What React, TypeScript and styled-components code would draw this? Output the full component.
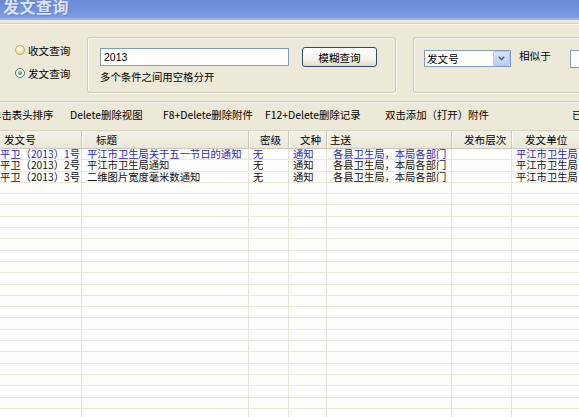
import React from "react";
import styled, { createGlobalStyle } from "styled-components";

const GlobalStyle = createGlobalStyle`
  html, body {
    margin: 0;
    padding: 0;
  }
  body {
    width: 579px;
    height: 417px;
    overflow: hidden;
    background: #ece9d8;
    font-family: "Noto Sans CJK SC", "Liberation Sans", sans-serif;
    font-size: 10.4px;
    color: #000;
  }
`;

type Column = {
  title: string;
  width: number;
  headPad: number;
  cellPad: number;
};

const COLUMNS: Column[] = [
  { title: "发文号", width: 82, headPad: 4, cellPad: 0 },
  { title: "标题", width: 167, headPad: 14, cellPad: 5 },
  { title: "密级", width: 40, headPad: 11, cellPad: 4 },
  { title: "文种", width: 38, headPad: 11, cellPad: 4 },
  { title: "主送", width: 125, headPad: 3, cellPad: 6 },
  { title: "发布层次", width: 60, headPad: 12, cellPad: 4 },
  { title: "发文单位", width: 110, headPad: 13, cellPad: 4 },
];

const RECORDS: string[][] = [
  ["平卫（2013）1号", "平江市卫生局关于五一节日的通知", "无", "通知", "各县卫生局，本局各部门", "", "平江市卫生局"],
  ["平卫（2013）2号", "平江市卫生局通知", "无", "通知", "各县卫生局，本局各部门", "", "平江市卫生局"],
  ["平卫（2013）3号", "二维图片宽度毫米数通知", "无", "通知", "各县卫生局，本局各部门", "", "平江市卫生局"],
];

const EMPTY_ROWS = 22;

const TOOLS: [string, number][] = [
  ["单击表头排序", 79],
  ["Delete删除视图", 93],
  ["F8+Delete删除附件", 102],
  ["F12+Delete删除记录", 120],
  ["双击添加（打开）附件", 187],
  ["已选中 3 条记录", 100],
];

const gridCols = COLUMNS.map((c) => `${c.width}px`).join(" ");

const Window = styled.div`
  width: 579px;
  height: 417px;
  overflow: hidden;
  display: flex;
  flex-direction: column;
`;

const TitleBar = styled.div`
  flex: none;
  height: 18px;
  background: linear-gradient(180deg, #6b8bd6 0%, #7595de 70%, #7f9ee3 100%);
  border-bottom: 2px solid #96b4ec;
  overflow: hidden;
  padding-left: 3px;
`;

const TitleText = styled.div`
  margin-top: -3px;
  font-size: 16px;
  line-height: 18px;
  font-weight: bold;
  color: rgba(236, 241, 252, 0.88);
  letter-spacing: 0.5px;
  text-shadow: 1px 1px 1px rgba(60, 80, 140, 0.3);
`;

const TitleRule = styled.div`
  flex: none;
  margin-top: 3px;
  height: 1px;
  background: #d8cfc6;
  border-bottom: 1px solid #f8f6ee;
`;

const SearchArea = styled.div`
  flex: none;
  height: 76px;
  display: flex;
  align-items: flex-start;
`;

const RadioColumn = styled.div`
  flex: none;
  width: 72px;
  margin-left: 15px;
  padding-top: 18px;
  display: flex;
  flex-direction: column;
  gap: 9px;
`;

const RadioRow = styled.label`
  display: flex;
  align-items: center;
  gap: 3px;
  height: 14px;
  white-space: nowrap;
  font-size: 10.6px;
`;

const RadioDot = styled.span<{ $checked?: boolean }>`
  box-sizing: border-box;
  width: 10px;
  height: 10px;
  border-radius: 50%;
  flex: none;
  display: flex;
  align-items: center;
  justify-content: center;
  border: 1px solid ${(p) => (p.$checked ? "#4f6f99" : "#b6a978")};
  background: ${(p) =>
    p.$checked
      ? "linear-gradient(135deg, #e6e6df 0%, #ffffff 70%)"
      : "radial-gradient(circle at 40% 35%, #fffbe8 0%, #f5e3a4 60%, #e4c56e 100%)"};
`;

const RadioMark = styled.span`
  width: 4px;
  height: 4px;
  border-radius: 50%;
  background: radial-gradient(circle at 35% 35%, #7fe27f 0%, #22a022 70%);
`;

const GroupBox = styled.div<{ $w: number; $ml: number }>`
  box-sizing: border-box;
  width: ${(p) => p.$w}px;
  height: 56px;
  margin-top: 12px;
  margin-left: ${(p) => p.$ml}px;
  flex: none;
  border: 1px solid #cdc9b8;
  border-radius: 3px;
  box-shadow: inset 1px 1px 0 #fbfaf4, 1px 1px 0 #fbfaf4;
`;

const KeywordBox = styled.div`
  padding: 9px 0 0 12px;
  display: flex;
  flex-direction: column;
  gap: 3px;
`;

const KeywordRow = styled.div`
  display: flex;
  align-items: center;
  gap: 13px;
`;

const TextInput = styled.div<{ $w: number }>`
  box-sizing: border-box;
  width: ${(p) => p.$w}px;
  height: 18px;
  border: 1px solid #7f9db9;
  background: #fff;
  font-family: "Liberation Sans", Arial, sans-serif;
  font-size: 10.5px;
  line-height: 16px;
  padding-left: 3px;
  flex: none;
`;

const Button = styled.div`
  box-sizing: border-box;
  width: 75px;
  height: 20px;
  border: 1px solid #2f4a6e;
  border-radius: 3px;
  background: linear-gradient(180deg, #ffffff 0%, #f4f3ee 60%, #dedbcd 100%);
  display: flex;
  align-items: center;
  justify-content: center;
  font-size: 10.6px;
  flex: none;
`;

const Hint = styled.div`
  height: 14px;
  line-height: 14px;
  font-size: 10.4px;
`;

const FieldBox = styled.div`
  padding: 12px 0 0 10px;
  display: flex;
  align-items: flex-start;
`;

const Select = styled.div`
  box-sizing: border-box;
  width: 87px;
  height: 17px;
  border: 1px solid #7f9db9;
  background: #fff;
  display: flex;
  align-items: center;
  flex: none;
`;

const SelectText = styled.span`
  flex: 1;
  padding-left: 2px;
  font-size: 10.6px;
  line-height: 15px;
`;

const SelectArrow = styled.span`
  box-sizing: border-box;
  width: 17px;
  height: 15px;
  background: linear-gradient(180deg, #d9e4fc 0%, #bccdf7 100%);
  border: 1px solid #b5c7f2;
  border-radius: 2px;
  display: flex;
  align-items: center;
  justify-content: center;
`;

const SimilarLabel = styled.span`
  margin-left: 8px;
  margin-right: 19px;
  line-height: 11px;
  font-size: 10.6px;
  white-space: nowrap;
`;

const Separator = styled.div`
  flex: none;
  height: 1px;
  background: #cfcbba;
  border-bottom: 1px solid #faf9f3;
`;

const Toolbar = styled.div`
  flex: none;
  height: 27px;
  box-sizing: border-box;
  padding-bottom: 5px;
  margin-left: -9px;
  display: flex;
  align-items: center;
  white-space: nowrap;
`;

const ToolItem = styled.span<{ $w: number }>`
  flex: none;
  width: ${(p) => p.$w}px;
  font-size: 10.4px;
`;

const Grid = styled.div`
  flex: 1;
  background: #fefefc;
  overflow: hidden;
`;

const HeaderRow = styled.div`
  display: grid;
  grid-template-columns: ${gridCols};
  height: 19px;
  box-sizing: border-box;
  border-top: 1px solid #d9d5c4;
  border-bottom: 1px solid #cbc7b6;
  background: linear-gradient(180deg, #f3f1e7 0%, #ebe8da 100%);
`;

const HeadCell = styled.div<{ $pad: number }>`
  padding-left: ${(p) => p.$pad}px;
  border-right: 1px solid #cdc9b9;
  box-shadow: 1px 0 0 #fbfaf4;
  line-height: 17px;
  font-size: 10.6px;
  white-space: nowrap;
  overflow: hidden;
`;

const Row = styled.div`
  display: grid;
  grid-template-columns: ${gridCols};
  height: 11.3px;
`;

const Cell = styled.div<{ $pad: number; $current?: boolean }>`
  box-sizing: border-box;
  padding-left: ${(p) => p.$pad}px;
  border-right: 1px solid #e6e3d6;
  border-bottom: 1px solid #ebe8db;
  color: ${(p) => (p.$current ? "#1d28c2" : "#111")};
  font-size: 10.3px;
  line-height: 10.3px;
  white-space: nowrap;
  overflow: hidden;
`;

function Radio({ label, checked }: { label: string; checked?: boolean }) {
  return (
    <RadioRow>
      <RadioDot $checked={checked}>{checked && <RadioMark />}</RadioDot>
      {label}
    </RadioRow>
  );
}

export default function App() {
  const rows = [
    ...RECORDS,
    ...Array.from({ length: EMPTY_ROWS }, () => COLUMNS.map(() => "")),
  ];

  return (
    <>
      <GlobalStyle />
      <Window>
        <TitleBar>
          <TitleText>发文查询</TitleText>
        </TitleBar>
        <TitleRule />
        <SearchArea>
          <RadioColumn>
            <Radio label="收文查询" />
            <Radio label="发文查询" checked />
          </RadioColumn>
          <GroupBox $w={309} $ml={0}>
            <KeywordBox>
              <KeywordRow>
                <TextInput $w={189}>2013</TextInput>
                <Button>模糊查询</Button>
              </KeywordRow>
              <Hint>多个条件之间用空格分开</Hint>
            </KeywordBox>
          </GroupBox>
          <GroupBox $w={200} $ml={17}>
            <FieldBox>
              <Select>
                <SelectText>发文号</SelectText>
                <SelectArrow>
                  <svg width="7" height="5" viewBox="0 0 7 5">
                    <polyline
                      points="0.8,0.8 3.5,3.6 6.2,0.8"
                      fill="none"
                      stroke="#4d6185"
                      strokeWidth="1.5"
                    />
                  </svg>
                </SelectArrow>
              </Select>
              <SimilarLabel>相似于</SimilarLabel>
              <TextInput $w={40} />
            </FieldBox>
          </GroupBox>
        </SearchArea>
        <Separator />
        <Toolbar>
          {TOOLS.map(([text, w]) => (
            <ToolItem key={text} $w={w}>
              {text}
            </ToolItem>
          ))}
        </Toolbar>
        <Grid>
          <HeaderRow>
            {COLUMNS.map((c) => (
              <HeadCell key={c.title} $pad={c.headPad}>
                {c.title}
              </HeadCell>
            ))}
          </HeaderRow>
          {rows.map((row, i) => (
            <Row key={i}>
              {row.map((value, j) => (
                <Cell key={j} $pad={COLUMNS[j].cellPad} $current={i === 0}>
                  {value}
                </Cell>
              ))}
            </Row>
          ))}
        </Grid>
      </Window>
    </>
  );
}
